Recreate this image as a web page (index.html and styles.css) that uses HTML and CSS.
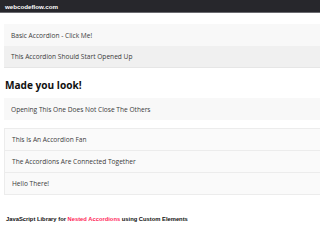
FILE: index.html
```html
<!DOCTYPE html>
<html>
<head>
<meta charset="utf-8">
<link rel="stylesheet" href="styles.css">
</head>
<body>
<header class="topbar"><span class="brand">webcodeflow.com</span></header>
<main class="content">
  <div class="acc-group first">
    <div class="acc">Basic Accordion - Click Me!</div>
    <div class="acc open">This Accordion Should Start Opened Up</div>
    <div class="acc-body"></div>
  </div>
  <h2 class="title">Made you look!</h2>
  <div class="acc-group single">
    <div class="acc">Opening This One Does Not Close The Others</div>
  </div>
  <div class="acc-group boxed">
    <div class="acc">This Is An Accordion Fan</div>
    <div class="acc">The Accordions Are Connected Together</div>
    <div class="acc">Hello There!</div>
  </div>
  <p class="footer">JavaScript Library for <span class="hl">Nested Accordions</span> using Custom Elements</p>
</main>
</body>
</html>
```
FILE: styles.css
```css
html, body {
  margin: 0;
  padding: 0;
  background: #fff;
  overflow: hidden;
}
body {
  font-family: "Open Sans", "Noto Sans", sans-serif;
  color: #333;
}
.topbar {
  height: 12px;
  background: #27272c;
  border-bottom: 1px solid #6b6b70;
  display: flex;
  align-items: center;
  padding-left: 5px;
}
.brand {
  font-family: "Liberation Sans", Arial, sans-serif;
  font-weight: bold;
  font-size: 6.2px;
  color: #fff;
}
.content {
  padding-left: 4px;
}
.acc-group {
  display: flex;
  flex-direction: column;
}
.acc-group.first {
  margin-top: 11px;
}
.acc {
  height: 22px;
  display: flex;
  align-items: center;
  padding-left: 7px;
  background: #f8f8f8;
  font-size: 6.6px;
  color: #3a3a3a;
  white-space: nowrap;
}
.acc.open {
  background: #f0f0f0;
  height: 21px;
}
.acc-body {
  height: 1px;
  background: #e6e6e6;
}
.title {
  margin: 10px 0 0 1px;
  font-family: "Open Sans", "Noto Sans", sans-serif;
  font-weight: 700;
  font-size: 10.1px;
  line-height: 14px;
  color: #111;
}
.acc-group.single {
  margin-top: 6px;
}
.acc-group.boxed {
  margin-top: 8px;
  border: 1px solid #ececec;
  border-right: none;
}
.acc-group.boxed .acc {
  height: 21px;
  background: #fafafa;
}
.acc-group.boxed .acc + .acc {
  border-top: 1px solid #ececec;
}
.footer {
  margin: 21px 0 0 2px;
  font-family: "Liberation Sans", Arial, sans-serif;
  font-weight: bold;
  font-size: 5.8px;
  color: #111;
}
.hl {
  color: #ff1f5a;
}
```
